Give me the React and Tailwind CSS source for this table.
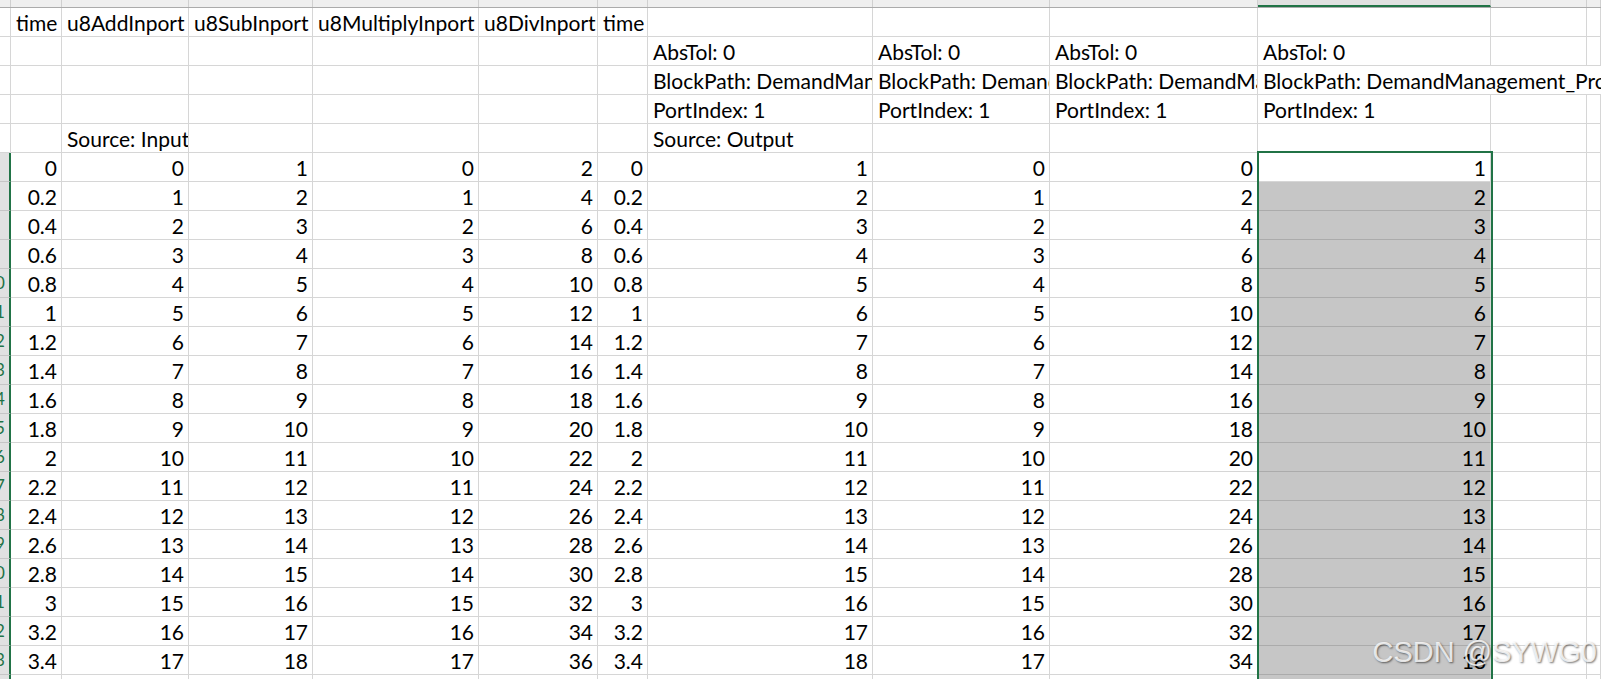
import React from "react";

// column widths: row header, A..L
const COLS = [
  "w-[11px]",
  "w-[51px]",
  "w-[127px]",
  "w-[124px]",
  "w-[166px]",
  "w-[119px]",
  "w-[50px]",
  "w-[225px]",
  "w-[177px]",
  "w-[208px]",
  "w-[233px]",
  "w-[96px]",
  "w-[14px]",
];

const SEL = 10; // selected column index (J)

const META = [
  { 1: "time", 2: "u8AddInport", 3: "u8SubInport", 4: "u8MultiplyInport", 5: "u8DivInport", 6: "time" },
  { 7: "AbsTol: 0", 8: "AbsTol: 0", 9: "AbsTol: 0", 10: "AbsTol: 0" },
  {
    7: "BlockPath: DemandManagement_Project/Subsystem",
    8: "BlockPath: DemandManagement_Project/Subsystem",
    9: "BlockPath: DemandManagement_Project/Subsystem",
    10: "BlockPath: DemandManagement_Project/Subsystem/Outport",
  },
  { 7: "PortIndex: 1", 8: "PortIndex: 1", 9: "PortIndex: 1", 10: "PortIndex: 1" },
  { 2: "Source: Input", 7: "Source: Output" },
];

const fmt = (v) => String(Math.round(v * 10) / 10);

const DATA = Array.from({ length: 18 }, (_, i) => {
  const t = fmt(i * 0.2);
  return {
    1: t,
    2: i,
    3: i + 1,
    4: i,
    5: 2 * i + 2,
    6: t,
    7: i + 1,
    8: i,
    9: 2 * i,
    10: i + 1,
  };
});

function HeaderStrip() {
  return (
    <div className="flex h-[8px] bg-[#efefef] border-b border-[#ababab]">
      {COLS.map((w, c) => (
        <div
          key={c}
          className={
            w +
            " shrink-0 h-full " +
            (c === SEL
              ? "bg-[#e1e1e1] border-b-2 border-[#217346] border-r border-r-[#c9c9c9]"
              : "border-r border-[#d0d0d0]")
          }
        />
      ))}
    </div>
  );
}

function MetaRow({ cells, rowIndex }) {
  return (
    <div className="flex h-[29px]">
      {COLS.map((w, c) => {
        if (c === 0) {
          return (
            <div key={c} className={w + " shrink-0 bg-white border-r border-b border-[#d6d6d6]"} />
          );
        }
        const text = cells[c];
        // long BlockPath in J spills over the empty cells to its right
        const spill = rowIndex === 2 && c >= SEL;
        return (
          <div
            key={c}
            className={
              w +
              " shrink-0 border-b border-[#d6d6d6] pl-[5px] pt-[2px] leading-[25px] whitespace-nowrap " +
              (spill ? "overflow-visible" : "overflow-hidden border-r")
            }
          >
            {text}
          </div>
        );
      })}
    </div>
  );
}

function DataRow({ row, idx }) {
  const rowNo = idx + 6;
  return (
    <div className="flex h-[29px]">
      <div className="w-[11px] shrink-0 overflow-hidden bg-[#e1e1e1] border-r-2 border-r-[#217346] border-b border-b-[#c6c6c6]">
        <div className="w-[40px] ml-[-25px] text-center text-[17px] leading-[28px] text-[#217346]">
          {rowNo}
        </div>
      </div>
      {COLS.slice(1).map((w, k) => {
        const c = k + 1;
        const sel = c === SEL && idx > 0;
        return (
          <div
            key={c}
            className={
              w +
              " shrink-0 text-right pr-[4px] pt-[2px] leading-[25px] whitespace-nowrap overflow-hidden " +
              (sel
                ? "bg-[#c6c6c6] border-b border-[#ababab] border-r border-r-[#d6d6d6]"
                : "border-r border-b border-[#d6d6d6]")
            }
          >
            {row[c] !== undefined ? row[c] : ""}
          </div>
        );
      })}
    </div>
  );
}

export default function App() {
  return (
    <div className="relative w-full h-[679px] overflow-hidden bg-white text-black text-[21px] [font-family:Lato,sans-serif]">
      <HeaderStrip />
      {META.map((cells, i) => (
        <MetaRow key={i} cells={cells} rowIndex={i} />
      ))}
      {DATA.map((row, i) => (
        <DataRow key={i} row={row} idx={i} />
      ))}
      <DataRow row={{}} idx={18} />

      {/* selection outline */}
      <div className="absolute left-[1257px] top-[151px] w-[236px] h-[540px] border-2 border-[#217346] pointer-events-none" />

      {/* watermark */}
      <div className="absolute right-[4px] bottom-[12px] text-[29px] leading-none text-white/80 [font-family:'Liberation_Sans',Arial,sans-serif] [text-shadow:1px_1px_2px_rgba(0,0,0,0.55)]">
        CSDN @SYWG0
      </div>
    </div>
  );
}
